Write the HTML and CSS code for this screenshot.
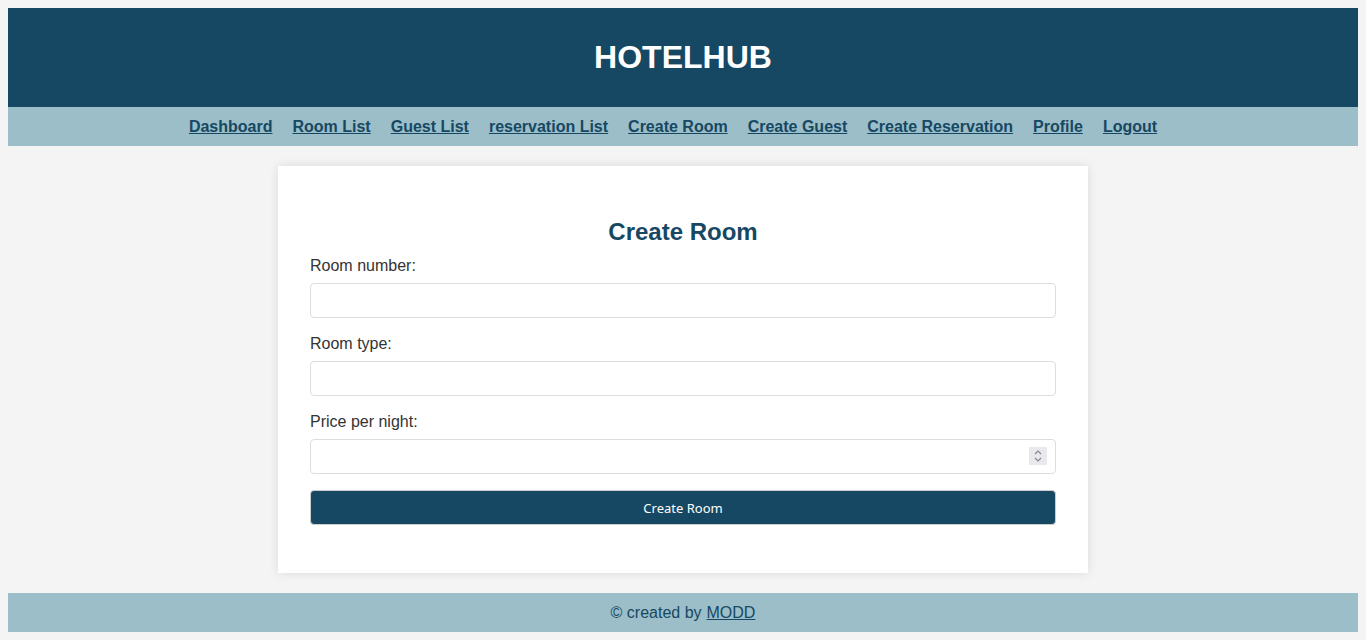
FILE: index.html
```html
<!DOCTYPE html>
<html>

<head>
    <meta charset='utf-8'>
    <title>HotelHub - Create Room</title>
    <meta name='viewport' content='width=device-width, initial-scale=1'>
    <link rel="stylesheet" href="styles.css">
</head>

<body>
    <header class="topbar">
        <h1>HOTELHUB</h1>
    </header>
    <nav class="menu">
        <a href="#">Dashboard</a>
        <a href="#">Room List</a>
        <a href="#">Guest List</a>
        <a href="#">reservation List</a>
        <a href="#">Create Room</a>
        <a href="#">Create Guest</a>
        <a href="#">Create Reservation</a>
        <a href="#">Profile</a>
        <a href="#">Logout</a>
    </nav>
    <main class="page">
        <div class="card">
            <h2>Create Room</h2>
            <form class="room-form">
                <label for="number">Room number:</label>
                <input id="number" type="text">
                <label for="type">Room type:</label>
                <input id="type" type="text">
                <label for="price">Price per night:</label>
                <div class="num-wrap">
                    <input id="price" type="number">
                    <span class="spin">
                        <svg width="10" height="14" viewBox="0 0 10 14">
                            <path d="M2 5 L5 2 L8 5 M2 9 L5 12 L8 9" fill="none" stroke="#888" stroke-width="1.2"/>
                        </svg>
                    </span>
                </div>
                <button type="button">Create Room</button>
            </form>
        </div>
    </main>
    <footer class="foot">
        &copy; created by <a href="#">MODD</a>
    </footer>
</body>

</html>
```
FILE: styles.css
```css
body {
    background: #f4f4f4;
    font-family: "Liberation Sans", Arial, sans-serif;
    margin: 8px;
}

.topbar {
    background: #164863;
    color: white;
    height: 99px;
    display: flex;
    align-items: center;
    justify-content: center;
}

.topbar h1 {
    font-size: 32px;
    margin: 0;
}

.menu {
    background: #9bbec8;
    height: 39px;
    display: flex;
    align-items: center;
    justify-content: center;
}

.menu a {
    color: #164863;
    font-weight: bold;
    font-size: 16px;
    margin-right: 20px;
}

.page {
    display: flex;
    justify-content: center;
    padding: 20px 0;
}

.card {
    background: white;
    width: 810px;
    box-sizing: border-box;
    padding: 32px 32px 48px;
    box-shadow: 0 0 10px rgba(0, 0, 0, 0.1);
}

.card h2 {
    color: #164863;
    text-align: center;
    font-size: 24px;
    margin: 20px 0 10px;
}

.room-form {
    display: flex;
    flex-direction: column;
}

.room-form label {
    color: #333;
    font-size: 16px;
    line-height: 18px;
    padding-top: 1px;
    margin-bottom: 8px;
}

.room-form input {
    height: 35px;
    box-sizing: border-box;
    border: 1px solid #ddd;
    border-radius: 4px;
    padding: 8px;
    margin: 0 0 16px;
    font-size: 14px;
}

.num-wrap {
    position: relative;
    display: flex;
    flex-direction: column;
}

.spin {
    position: absolute;
    right: 9px;
    top: 8px;
    width: 18px;
    height: 18px;
    background: #e9e9ed;
    display: flex;
    align-items: center;
    justify-content: center;
}

.room-form button {
    height: 35px;
    background: #164863;
    color: white;
    border: 1px solid #ccc;
    border-radius: 4px;
    font-family: "Noto Sans", sans-serif;
    font-size: 13px;
}

.foot {
    background: #9bbec8;
    color: #164863;
    height: 39px;
    display: flex;
    align-items: center;
    justify-content: center;
    gap: 5px;
    font-size: 16px;
}

.foot a {
    color: #164863;
}
```
